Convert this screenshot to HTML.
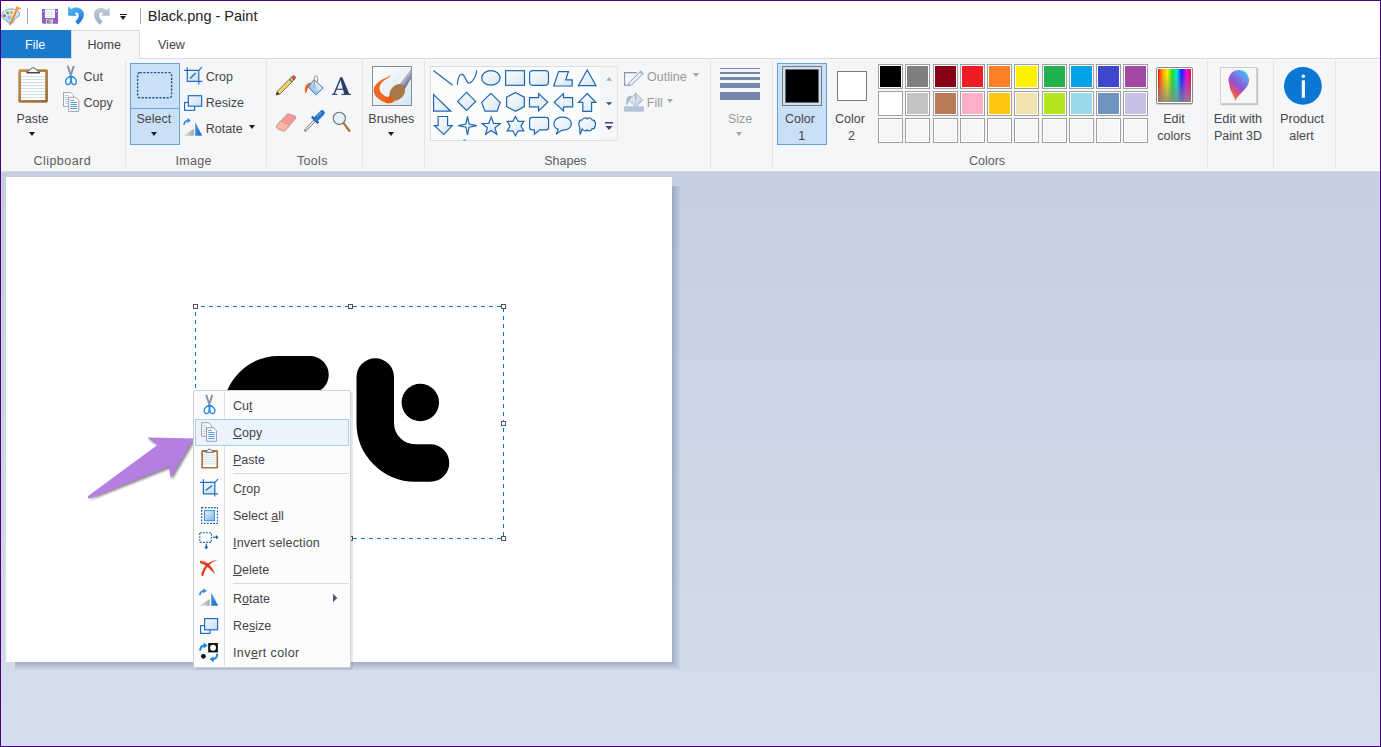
<!DOCTYPE html>
<html><head><meta charset="utf-8">
<style>
*{margin:0;padding:0;box-sizing:border-box}
html,body{width:1381px;height:747px;overflow:hidden;background:#fff}
body{position:relative;font-family:"Liberation Sans",sans-serif;font-size:12.5px;color:#474747}
.a{position:absolute}
svg{position:absolute;overflow:visible}
.t{position:absolute;white-space:nowrap;line-height:1}
#frame{position:absolute;left:0;top:0;width:1381px;height:747px;border:1px solid #47007f;z-index:50;pointer-events:none}
#title{left:1px;top:1px;width:1379px;height:29px;background:#fff}
#tabs{left:1px;top:30px;width:1379px;height:28px;background:#fff}
#ribbon{left:1px;top:58px;width:1379px;height:113px;background:#f5f6f7;border-top:1px solid #dadbdc}
#ribbonline{left:1px;top:171px;width:1379px;height:1px;background:#d5d9de}
#work{left:1px;top:172px;width:1379px;height:574px;background:linear-gradient(#c5cfe0,#d4deec)}
.sep{position:absolute;top:61px;width:1px;height:106px;background:#e2e3e4}
.lbl{position:absolute;white-space:nowrap;line-height:1;color:#5c5c5c;font-size:12.5px;top:155px}
.arr{position:absolute;width:0;height:0;border-left:3px solid transparent;border-right:3px solid transparent;border-top:4px solid #1e1e1e}
.sw{position:absolute;width:25px;height:25px;border:1px solid #a0a0a0;padding:1px;background:#fff}
.sw i{display:block;width:21px;height:21px}
.sw.e{background:#f5f6f7;box-shadow:inset 0 0 0 1px #fff}
.mi{position:absolute;left:233px;white-space:nowrap;line-height:1;color:#444;font-size:12.5px}
.u{text-decoration:underline;text-underline-offset:1.2px}
.c{text-align:center}
</style></head><body>
<div id="title" class="a"></div>
<div id="tabs" class="a"></div>
<div id="ribbon" class="a"></div>
<div id="ribbonline" class="a"></div>
<div id="work" class="a"></div>
<!-- title bar -->
<svg style="left:0;top:0" width="30" height="30" viewBox="0 0 30 30">
  <defs><linearGradient id="pal" x1="0" y1="0" x2="0" y2="1"><stop offset="0" stop-color="#e8f2fc"/><stop offset="1" stop-color="#b4d0ee"/></linearGradient></defs>
  <path d="M1.6 16.5 C1.2 12 6 9 11 9 C16 9 19.6 11 19.5 14.2 C19.4 17.2 16.2 17.6 14.8 19.2 C13.8 20.6 14.8 22.6 11.2 23.2 C7.5 23.6 6.5 20.5 4.5 19.2 C3 18.5 1.8 18.2 1.6 16.5 Z" fill="url(#pal)" stroke="#5f98d4" stroke-width="0.9"/>
  <circle cx="4.4" cy="15.8" r="1.5" fill="#e84a3a"/>
  <circle cx="7.6" cy="12.7" r="1.5" fill="#54b040"/>
  <circle cx="11.5" cy="12.3" r="1.5" fill="#f2a03a"/>
  <circle cx="9.3" cy="17.4" r="1.3" fill="none" stroke="#5f98d4" stroke-width="0.9"/>
  <path d="M10.3 24.2 L16 11.6" stroke="#ea8a1c" stroke-width="1.9" stroke-linecap="round"/>
  <path d="M15.6 10.8 L16.4 6.6 L20.8 8.4 Z" fill="#f0a850" stroke="#e08830" stroke-width="0.5"/>
</svg>
<div class="a" style="left:27px;top:8px;width:1px;height:16px;background:#a8a8a8"></div>
<svg style="left:0;top:0" width="60" height="30" viewBox="0 0 60 30">
  <defs><linearGradient id="shut" x1="0" y1="0" x2="1" y2="0"><stop offset="0" stop-color="#e0e0e0"/><stop offset="0.5" stop-color="#a8a8a8"/><stop offset="1" stop-color="#d8d8d8"/></linearGradient></defs>
  <path d="M42 9 H58 V23.8 H43 L42 22.8 Z" fill="#8a5ec6"/>
  <rect x="44.9" y="9" width="10.1" height="9" fill="#fff"/>
  <path d="M44.9 9.6 H55" stroke="#b8c8dc" stroke-width="1"/>
  <path d="M45.5 12.6 H54.4 M45.5 14.5 H54.4 M45.5 16.4 H54.4" stroke="#dedede" stroke-width="0.9"/>
  <rect x="45.9" y="19.1" width="7.1" height="4.7" fill="url(#shut)"/>
  <rect x="46.9" y="20.3" width="1.8" height="2.6" fill="#7a50b8"/>
  <circle cx="43.5" cy="11.6" r="0.6" fill="#fff"/><circle cx="56.5" cy="11.6" r="0.6" fill="#fff"/>
</svg>
<svg style="left:0;top:0" width="120" height="30" viewBox="0 0 120 30">
  <defs>
    <linearGradient id="ug" x1="0" y1="0" x2="0.4" y2="1"><stop offset="0" stop-color="#58c4fa"/><stop offset="1" stop-color="#1b78d6"/></linearGradient>
    <linearGradient id="rg" x1="0" y1="0" x2="0" y2="1"><stop offset="0" stop-color="#c2cede"/><stop offset="1" stop-color="#9babc2"/></linearGradient>
  </defs>
  <path fill="url(#ug)" d="M68.1 5.9 L71 9.1 C74.5 6.3 80.8 7 83.2 11.5 C85 15.5 83 20 78 24.7 L75.3 21.4 C78.5 18.5 79.5 15.5 78.2 13.5 C77.4 12.4 76 12.3 74.6 13.1 L76.9 15.7 L68.1 15.7 Z"/>
  <path fill="url(#rg)" transform="translate(177.8 0) scale(-1 1)" d="M68.1 6.9 L71.2 10.2 C74.5 6.8 80.8 7 83.2 11.5 C85 15.5 83 20 78 24.7 L75.3 21.4 C78.5 18.5 79.5 15.5 78.2 13.5 C77.4 12.4 76 12.3 74.6 13.4 L76.9 15.7 L68.1 15.7 Z"/>
</svg>
<div class="a" style="left:120px;top:13.5px;width:7px;height:1.2px;background:#1a1a1a"></div>
<div class="arr" style="left:120px;top:16px;border-left-width:3.5px;border-right-width:3.5px;border-top-width:4px"></div>
<div class="a" style="left:140px;top:8px;width:1px;height:16px;background:#a8a8a8"></div>
<div class="t" style="left:147.8px;top:8.5px;font-size:14.5px;color:#222">Black.png - Paint</div>
<!-- tabs -->
<div class="a" style="left:1px;top:30px;width:70px;height:28px;background:#1979ca"></div>
<div class="t" style="left:25px;top:39.1px;color:#fff">File</div>
<div class="a" style="left:71px;top:30px;width:69px;height:29px;background:#f5f6f7;border:1px solid #dadbdc;border-bottom:none"></div>
<div class="t" style="left:87.5px;top:39.1px;color:#444">Home</div>
<div class="t" style="left:158px;top:39.1px;color:#444">View</div>

<!-- clipboard group -->
<svg style="left:0;top:0" width="130" height="140" viewBox="0 0 130 140">
  <defs>
    <linearGradient id="brd" x1="0" y1="0" x2="1" y2="1"><stop offset="0" stop-color="#c0924e"/><stop offset="1" stop-color="#9a6a35"/></linearGradient>
  </defs>
  <rect x="18.3" y="69.2" width="29.6" height="33.6" rx="1.8" fill="url(#brd)"/>
  <rect x="21" y="72" width="24.2" height="28" fill="#fff"/>
  <path d="M21 76.6H45.2M21 79.6H45.2M21 82.6H45.2M21 85.6H45.2M21 88.6H45.2M21 91.6H45.2M21 94.6H45.2M21 97.6H45.2" stroke="#c4d6e2" stroke-width="0.9"/>
  <path d="M26.8 72.6 L31 68.6 Q33 66.6 35 68.6 L39.6 72.6 Z" fill="#f4f4f4" stroke="#505050" stroke-width="0.9"/>
  <path d="M26.5 72.8 H40" stroke="#3a3a3a" stroke-width="1.2"/>
  <!-- scissors -->
  <g transform="translate(-138.5 -329)"><path d="M205.6 395.2 L207 395 L210.2 405.6 L209.1 405.8 Z M212.9 395.2 L211.5 395 L208.3 405.6 L209.4 405.8 Z" fill="#7a8aa4" stroke="#7a8aa4" stroke-width="0.5" stroke-linejoin="round"/>
  <path d="M209.2 405.2 C206 406.6 203.9 408.6 204.1 411 C204.3 413 205.6 413.8 207 413.6 C208.5 413.4 209.2 411.6 209.2 409.6 Z M209.8 405.2 C213 406.6 215.1 408.6 214.9 411 C214.7 413 213.4 413.8 212 413.6 C210.5 413.4 209.8 411.6 209.8 409.6 Z" fill="none" stroke="#2a8ee2" stroke-width="1.4" stroke-linejoin="round"/></g>
  <!-- copy -->
  <path d="M63.5 92.5 H70.5 L73.5 95.5 V106.3 H63.5 Z" fill="#fff" stroke="#9a9a9a" stroke-width="0.9"/>
  <path d="M65 95.5H69M65 97.6H71M65 99.6H71M65 101.6H71M65 103.6H71" stroke="#9cc4e8" stroke-width="0.8"/>
  <path d="M68.7 97.3 H75.8 L78.8 100.3 V111.4 H68.7 Z" fill="#fff" stroke="#9a9a9a" stroke-width="0.9"/>
  <path d="M70.3 100.3H74M70.3 102.5H77M70.3 104.5H77M70.3 106.5H77M70.3 108.5H77" stroke="#3c8ed8" stroke-width="0.9"/>
</svg>
<div class="t" style="left:83.5px;top:70.9px">Cut</div>
<div class="t" style="left:83.5px;top:97.4px">Copy</div>
<div class="t" style="left:16.5px;top:113.2px">Paste</div>
<div class="arr" style="left:29px;top:131.5px"></div>
<div class="lbl" style="left:33.5px;letter-spacing:0.45px">Clipboard</div>
<div class="sep" style="left:125px"></div>

<!-- image group -->
<div class="a" style="left:130px;top:63px;width:50px;height:82px;background:#c9e0f6;border:1px solid #64a4e4"></div>
<div class="a" style="left:130px;top:108px;width:50px;height:1px;background:#64a4e4"></div>
<svg style="left:0;top:0" width="270" height="140" viewBox="0 0 270 140">
  <rect x="137.6" y="72.6" width="34" height="25.2" rx="2" fill="none" stroke="#1e5696" stroke-width="1.4" stroke-dasharray="2.2 1.4"/>
  <!-- crop -->
  <defs><linearGradient id="lb" x1="0" y1="0" x2="1" y2="1"><stop offset="0" stop-color="#f4f9fd"/><stop offset="1" stop-color="#c8dff2"/></linearGradient></defs>
  <rect x="187.3" y="70.4" width="11.5" height="10.9" fill="url(#lb)"/>
  <path d="M184.2 70.4 H198.8 V84.5 M187.3 67.2 V81.3 H202.5 M198.8 70.4 L202 67.2" fill="none" stroke="#1f6fc0" stroke-width="1.2"/>
  <path d="M190 78.6 L195.7 73" stroke="#1f6fc0" stroke-width="1.4"/>
  <!-- resize -->
  <rect x="184.6" y="102.5" width="10" height="7.8" fill="#fff" stroke="#1f6fc0" stroke-width="1.2"/>
  <rect x="188.3" y="95.7" width="13.3" height="10.5" fill="url(#lb)" stroke="#1f6fc0" stroke-width="1.2"/>
  <!-- rotate -->
  <defs><linearGradient id="gt" x1="0" y1="0" x2="1" y2="0"><stop offset="0" stop-color="#e8e8e8"/><stop offset="1" stop-color="#a8a8a8"/></linearGradient>
  <linearGradient id="bt" x1="0" y1="0" x2="1" y2="1"><stop offset="0" stop-color="#4aa0e8"/><stop offset="1" stop-color="#1a6cc0"/></linearGradient></defs>
  <path d="M183 135.7 L194 128.7 V135.7 Z" fill="url(#gt)"/>
  <path d="M195.2 122 L202.2 135.7 H195.2 Z" fill="url(#bt)"/>
  <path d="M184 124.8 Q184.4 120.9 187.9 120.6" fill="none" stroke="#2b8ce0" stroke-width="1.7"/>
  <path d="M187.3 118 L190.9 120.6 L187.3 123.2 Z" fill="#2b8ce0"/>
</svg>
<div class="t" style="left:136.5px;top:112.7px">Select</div>
<div class="arr" style="left:151px;top:131.6px"></div>
<div class="t" style="left:205.8px;top:71.2px">Crop</div>
<div class="t" style="left:205.8px;top:97.0px">Resize</div>
<div class="t" style="left:205.8px;top:122.6px">Rotate</div>
<div class="arr" style="left:249px;top:125px"></div>
<div class="lbl" style="left:175.5px;letter-spacing:0.3px">Image</div>
<div class="sep" style="left:266px"></div>

<!-- tools group -->
<svg style="left:0;top:0" width="430" height="140" viewBox="0 0 430 140">
  <!-- pencil -->
  <path d="M276.2 95 L277.3 91.3 L291.3 77.3 L294 80 L280 94 Z" fill="#f7cf6e" stroke="#4a3c28" stroke-width="0.7" stroke-linejoin="round"/>
  <path d="M276.2 95 L277.1 91.8 L279.4 94.1 Z" fill="#2a2a2a"/>
  <path d="M289.4 79.2 L292.1 81.9" stroke="#2e9a48" stroke-width="1.3"/>
  <path d="M291.3 77.3 L292.6 76 Q293.6 75.2 294.6 76.1 L295.2 76.7 Q296 77.7 295.2 78.7 L294 80 Z" fill="#e25a4a" stroke="#5a4038" stroke-width="0.6"/>
  <!-- bucket -->
  <defs><linearGradient id="bk" x1="0.8" y1="0.2" x2="0.2" y2="0.8"><stop offset="0" stop-color="#ffffff"/><stop offset="1" stop-color="#8ab8e4"/></linearGradient></defs>
  <path d="M310.8 82.6 Q306.5 83.5 305.2 87 Q304 90.5 305.4 93.8 Q307.4 91.5 307.8 88.6 Q308.4 86.6 309.8 85.8 Z" fill="#f46420"/>
  <path d="M314 79.7 L323.2 88.1 L315.9 94.8 L308.4 87.2 Z" fill="url(#bk)" stroke="#3a78c0" stroke-width="1"/>
  <path d="M314.3 85.6 V77.6 Q314.5 75.9 315.9 75.9 Q317.5 75.9 317.6 77.6 V81.8" fill="none" stroke="#8a8a8a" stroke-width="0.9"/>
  <circle cx="314.3" cy="86.6" r="1.1" fill="#fff" stroke="#8a8a8a" stroke-width="0.7"/>
</svg>
<svg style="left:0;top:0" width="360" height="100" viewBox="0 0 360 100"><g fill="#2b3a6a">
  <path d="M339.8 77.2 L342.3 77.2 L349.4 94.2 L344.3 94.2 Z"/>
  <path d="M340.6 78.4 L334 94.2" stroke="#2b3a6a" stroke-width="1.4"/>
  <rect x="336.2" y="88.7" width="8.3" height="1.1"/>
  <rect x="332" y="93.8" width="5.2" height="1.1"/>
  <rect x="341.3" y="93.8" width="9.7" height="1.1"/>
</g></svg>
<svg style="left:0;top:0" width="430" height="140" viewBox="0 0 430 140">
  <!-- eraser -->
  <path d="M276.4 125.6 L286.8 114.4 Q287.8 113.6 289.2 114 L294.9 116 Q296.4 116.8 295.6 118.4 L285.4 130.4 Q284.4 131.4 283 131 L277.6 128.8 Q275.9 127.8 276.4 125.6 Z" fill="#f29a9c" stroke="#cf7a76" stroke-width="0.7"/>
  <path d="M276.6 125.4 L280.6 121.2 L289.3 124.6 L285.4 130.4 Q284.4 131.4 283 131 L277.6 128.8 Q276 127.8 276.6 125.4 Z" fill="#f6b8a8" stroke="#cf8a7a" stroke-width="0.5"/>
  <!-- dropper -->
  <path d="M314.4 121 L305.4 130.3" stroke="#707070" stroke-width="2.6" stroke-linecap="round"/>
  <path d="M314.4 121 L305.6 130.1" stroke="#ffffff" stroke-width="1.2"/>
  <path d="M308 127.6 L305.6 130.1" stroke="#a8cff0" stroke-width="1.3"/>
  <path d="M312.6 117.4 L317.6 122.4" stroke="#2464b4" stroke-width="2.6" stroke-linecap="round"/>
  <path d="M316.2 118.8 L322.2 112.8" stroke="#2a76c8" stroke-width="5.2" stroke-linecap="round"/>
  <path d="M317.5 116.2 L321 112.7" stroke="#5aa0e0" stroke-width="1.2" stroke-linecap="round"/>
  <!-- magnifier -->
  <path d="M343.2 122.6 L349.3 130.8" stroke="#a87838" stroke-width="2.3" stroke-linecap="round"/>
  <circle cx="339.3" cy="118.3" r="6.1" fill="#e4f0fa" stroke="#707070" stroke-width="1.1"/>
  <!-- brushes -->
  <defs><linearGradient id="bg1" x1="0" y1="0" x2="1" y2="1"><stop offset="0" stop-color="#ffffff"/><stop offset="1" stop-color="#d4e6f4"/></linearGradient>
  <linearGradient id="hd" x1="0" y1="0" x2="1" y2="1"><stop offset="0" stop-color="#ffffff"/><stop offset="0.45" stop-color="#b8c0d4"/><stop offset="0.7" stop-color="#5a6478"/><stop offset="1" stop-color="#20242c"/></linearGradient></defs>
  <clipPath id="bclip"><rect x="373" y="67" width="38" height="38"/></clipPath>
  <rect x="372.5" y="66.5" width="39" height="39" fill="url(#bg1)" stroke="#8c8c8c" stroke-width="1"/>
  <g clip-path="url(#bclip)">
    <path d="M397.5 84.5 L411.5 66 L416 70 L404.5 89.5 Z" fill="url(#hd)"/>
    <path d="M398.5 84 L411 67.5" stroke="#ffffff" stroke-width="1.3" opacity="0.9"/>
  </g>
  <path d="M387.8 73.5 Q390.5 75.8 387.5 77.3 Q378 80.5 374.2 87 Q372.3 92.5 376.5 97 Q381 101.5 386.5 103 Q391 103.5 393.5 102 L390 97.5 Q384.5 97 381 92.8 Q378.2 88.5 380.5 84.5 Q383.5 79.8 388.8 77.8 Q391 76 387.8 73.5 Z" fill="#f26622"/>
  <ellipse cx="397.2" cy="92.4" rx="9.3" ry="6.8" transform="rotate(-50 397.2 92.4)" fill="#a87a4a"/>
  <path d="M384.5 100.5 Q387.5 97 390.5 95 L394.5 101 Q391 104.3 386.5 103 Z" fill="#ea5a1a"/>
</svg>
<div class="lbl" style="left:297px;letter-spacing:0.3px">Tools</div>
<div class="sep" style="left:362px"></div>
<div class="t" style="left:368.3px;top:113.0px">Brushes</div>
<div class="arr" style="left:388px;top:131.8px"></div>
<div class="sep" style="left:424px"></div>

<!-- shapes group -->
<div class="a" style="left:430px;top:66px;width:171px;height:75px;background:#fbfcfc;border:1px solid #dcdddf"></div>
<div class="a" style="left:600px;top:66px;width:18px;height:75px;background:#f5f6f7;border:1px solid #e3e4e6;border-left:none"></div>
<svg style="left:0;top:0" width="630" height="145" viewBox="0 0 630 145">
  <defs><linearGradient id="sf" x1="0" y1="0" x2="1" y2="1"><stop offset="0" stop-color="#ffffff"/><stop offset="1" stop-color="#d6e6f4"/></linearGradient></defs>
  <g fill="url(#sf)" stroke="#1f66b2" stroke-width="1.2" stroke-linejoin="miter">
    <path d="M433.4 70.6 L452.6 85.2" fill="none"/>
    <path d="M457.4 84.6 C458 74 462 72 464.5 76.5 C466.5 80 467 84 469.5 83 C473 81.5 476.5 76 476.7 70.3" fill="none"/>
    <ellipse cx="490.9" cy="77.9" rx="9.2" ry="7.2"/>
    <rect x="505.6" y="70.7" width="18.9" height="14.6"/>
    <rect x="529.6" y="70.7" width="18.9" height="14.6" rx="3.2"/>
    <path d="M558.6 71.6 H568.4 L565.8 79.9 H572.2 V86 H553.7 Z"/>
    <path d="M587.2 70 L596 85.6 H578.4 Z"/>
    <path d="M433.6 94.6 V111.2 H450.8 Z"/>
    <path d="M466.6 92.4 L475.6 101.4 L466.6 110.4 L457.6 101.4 Z"/>
    <path d="M490.9 93.4 L500.2 102.4 L497.2 111.2 H485 L481.7 102.4 Z"/>
    <path d="M515.5 92.5 L524.3 97.2 V106.6 L515.5 111.4 L506.6 106.6 V97.2 Z"/>
    <path d="M529.5 97.6 H538.6 V93.6 L547.8 102.2 L538.6 110.9 V106.9 H529.5 Z"/>
    <path d="M572.6 97.6 H563.5 V93.6 L554.2 102.2 L563.5 110.9 V106.9 H572.6 Z"/>
    <path d="M587.2 93.5 L595.8 102.4 H591.6 V111.3 H582.8 V102.4 H578.5 Z"/>
    <path d="M438.1 116.5 H447.6 V125.6 H452.2 L443.8 134.4 L434.4 125.6 H438.1 Z"/>
    <polygon points="467.5,116.4 469.1,124 476.7,125.6 469.1,127.2 467.5,134.8 465.9,127.2 458.3,125.6 465.9,124"/>
    <polygon points="491.2,116.9 493.6,123.3 500.3,123.5 495.0,127.7 496.8,134.3 491.2,130.5 485.6,134.3 487.4,127.7 482.1,123.5 488.8,123.3"/>
    <polygon points="515.5,116.5 518.2,121.4 523.8,121.3 520.9,126.1 523.8,130.9 518.2,130.8 515.5,135.7 512.8,130.8 507.2,130.9 510.1,126.1 507.2,121.3 512.8,121.4"/>
    <path d="M532.2 117.4 H546 Q548.6 117.4 548.6 120 V127.2 Q548.6 129.8 546 129.8 H539.6 L534.4 134.3 L534.4 129.8 H532.2 Q529.6 129.8 529.6 127.2 V120 Q529.6 117.4 532.2 117.4 Z"/>
    <path d="M558.2 129.4 C551.5 127 552.5 117.2 563 117.2 C573.5 117.2 574.5 129.4 563.5 130.2 C561.8 130.3 560.2 130.8 556.2 134.4 Z"/>
    <path d="M587.1 118.8 A3 3 0 0 1 592.0 119.9 A3 3 0 0 1 595.1 122.7 A3 3 0 0 1 595.1 126.1 A3 3 0 0 1 592.0 128.9 A3 3 0 0 1 587.1 130.0 A3 3 0 0 1 582.2 128.9 L580.1 134.6 L579.6 126.9 A3 3 0 0 1 579.1 126.1 A3 3 0 0 1 579.1 122.7 A3 3 0 0 1 582.2 119.9 A3 3 0 0 1 587.1 118.8 Z"/>
  </g>
  <path d="M463.5 140 H465.5" stroke="#1f66b2" stroke-width="1"/>
  <path d="M606 80.7 L609.1 77 L612.2 80.7 Z" fill="#a8b0bf"/>
  <path d="M606 102.2 H612.2 L609.1 105.2 Z" fill="#3b4a6e"/>
  <path d="M605 122 H613 V123.6 H605 Z M605.5 126 H612.5 L609 130 Z" fill="#3b4a6e"/>
</svg>
<div class="lbl" style="left:544.2px">Shapes</div>

<!-- outline / fill / size -->
<svg style="left:0;top:0" width="780" height="145" viewBox="0 0 780 145">
  <path d="M636.9 72.6 H624.6 V85.2 H628.5" fill="none" stroke="#8093b2" stroke-width="1.1"/>
  <path d="M628.3 85.5 L629.2 82.6 L640.8 71 L643.2 73.4 L631.6 85 Z" fill="#e8eef6" stroke="#8093b2" stroke-width="0.9"/>
  <path d="M640 71.8 L642.4 74.2" stroke="#8093b2" stroke-width="1"/>
  <defs><linearGradient id="fg" x1="0" y1="0" x2="1" y2="1"><stop offset="0" stop-color="#eef3f8"/><stop offset="1" stop-color="#b6c6da"/></linearGradient></defs>
  <path d="M631.5 95.5 Q627.2 96 626.3 99.8 V105.8 Q628.2 104.5 628.6 101.5 Q629.2 99 632 98.6 Z" fill="#a8b8cd"/>
  <path d="M628.8 100.2 L635.8 93.2 L642.8 100.2 L635.8 107.2 Z" fill="url(#fg)" stroke="#aebdd1" stroke-width="1"/>
  <path d="M635.6 99.6 V92.6" stroke="#a3b3c9" stroke-width="1.3"/>
  <rect x="624.1" y="106.3" width="19.8" height="5.4" fill="#b4c3d6"/>
</svg>
<div class="t" style="left:647px;top:71.2px;color:#9a9a9a">Outline</div>
<div class="arr" style="left:693px;top:73px;border-top-color:#a6a6a6"></div>
<div class="t" style="left:646.8px;top:96.6px;color:#9a9a9a">Fill</div>
<div class="arr" style="left:667px;top:99.2px;border-top-color:#a6a6a6"></div>
<div class="sep" style="left:710px"></div>
<div class="a" style="left:720px;top:67.6px;width:40px;height:1px;background:#7689aa"></div>
<div class="a" style="left:720px;top:71.8px;width:40px;height:2px;background:#7689aa"></div>
<div class="a" style="left:720px;top:76.9px;width:40px;height:3px;background:#7689aa"></div>
<div class="a" style="left:720px;top:83px;width:40px;height:4.7px;background:#7689aa"></div>
<div class="a" style="left:720px;top:92.2px;width:40px;height:7.7px;background:#7689aa"></div>
<div class="t" style="left:728px;top:112.7px;color:#9a9a9a">Size</div>
<div class="arr" style="left:736px;top:131.5px;border-top-color:#a6a6a6"></div>
<div class="sep" style="left:772px"></div>

<!-- colors group -->
<div class="a" style="left:777px;top:63px;width:50px;height:82px;background:#c9e0f6;border:1px solid #64a4e4"></div>
<div class="a" style="left:782px;top:66px;width:40px;height:40px;border:1px solid #7a7a7a;background:transparent;padding:2px"><div style="width:34px;height:34px;background:#000;border:1px solid #6a6a6a;border-radius:1px"></div></div>
<div class="t" style="left:785px;top:112.7px">Color</div>
<div class="t" style="left:798.3px;top:129.8px">1</div>
<div class="a" style="left:837px;top:71px;width:30px;height:30px;border:1px solid #7a7a7a;background:#fff"></div>
<div class="t" style="left:835px;top:112.7px">Color</div>
<div class="t" style="left:848px;top:129.8px">2</div>
<div class="sw" style="left:878.00px;top:64px"><i style="background:#000000"></i></div>
<div class="sw" style="left:905.25px;top:64px"><i style="background:#7f7f7f"></i></div>
<div class="sw" style="left:932.50px;top:64px"><i style="background:#880015"></i></div>
<div class="sw" style="left:959.75px;top:64px"><i style="background:#ed1c24"></i></div>
<div class="sw" style="left:987.00px;top:64px"><i style="background:#ff7f27"></i></div>
<div class="sw" style="left:1014.25px;top:64px"><i style="background:#fff200"></i></div>
<div class="sw" style="left:1041.50px;top:64px"><i style="background:#22b14c"></i></div>
<div class="sw" style="left:1068.75px;top:64px"><i style="background:#00a2e8"></i></div>
<div class="sw" style="left:1096.00px;top:64px"><i style="background:#3f48cc"></i></div>
<div class="sw" style="left:1123.25px;top:64px"><i style="background:#a349a4"></i></div>
<div class="sw" style="left:878.00px;top:91px"><i style="background:#ffffff"></i></div>
<div class="sw" style="left:905.25px;top:91px"><i style="background:#c3c3c3"></i></div>
<div class="sw" style="left:932.50px;top:91px"><i style="background:#b97a57"></i></div>
<div class="sw" style="left:959.75px;top:91px"><i style="background:#ffaec9"></i></div>
<div class="sw" style="left:987.00px;top:91px"><i style="background:#ffc90e"></i></div>
<div class="sw" style="left:1014.25px;top:91px"><i style="background:#efe4b0"></i></div>
<div class="sw" style="left:1041.50px;top:91px"><i style="background:#b5e61d"></i></div>
<div class="sw" style="left:1068.75px;top:91px"><i style="background:#99d9ea"></i></div>
<div class="sw" style="left:1096.00px;top:91px"><i style="background:#7092be"></i></div>
<div class="sw" style="left:1123.25px;top:91px"><i style="background:#c8bfe7"></i></div>
<div class="sw e" style="left:878.00px;top:118px"></div>
<div class="sw e" style="left:905.25px;top:118px"></div>
<div class="sw e" style="left:932.50px;top:118px"></div>
<div class="sw e" style="left:959.75px;top:118px"></div>
<div class="sw e" style="left:987.00px;top:118px"></div>
<div class="sw e" style="left:1014.25px;top:118px"></div>
<div class="sw e" style="left:1041.50px;top:118px"></div>
<div class="sw e" style="left:1068.75px;top:118px"></div>
<div class="sw e" style="left:1096.00px;top:118px"></div>
<div class="sw e" style="left:1123.25px;top:118px"></div>
<div class="lbl" style="left:969px">Colors</div>

<!-- edit colors / paint3d / product alert -->
<div class="a" style="left:1156px;top:67px;width:37px;height:37px;background:#fff;border:1px solid #8c8c8c;border-radius:2px;box-shadow:0 1px 1px rgba(0,0,0,.18)"></div>
<div class="a" style="left:1158px;top:69px;width:33px;height:33px;background:linear-gradient(rgba(136,136,136,0) 15%,rgba(136,136,136,.85)),linear-gradient(90deg,#ff1000,#ffa000,#f8f000,#20e020,#00e8e0,#1020ff,#e010e0,#ff0040)"></div>
<div class="t c" style="left:1150px;width:48px;top:113.2px">Edit</div>
<div class="t c" style="left:1150px;width:48px;top:129.8px">colors</div>
<div class="sep" style="left:1207px"></div>
<div class="a" style="left:1220px;top:67px;width:37px;height:37px;background:#f6f6f6;border:1px solid #cfcfcf;box-shadow:1px 1px 1px rgba(0,0,0,.2)"></div>
<svg style="left:0;top:0" width="1381" height="140" viewBox="0 0 1381 140">
  <defs>
    <linearGradient id="p3d" x1="0.8" y1="0" x2="0.2" y2="1">
      <stop offset="0" stop-color="#30d0f4"/><stop offset="0.3" stop-color="#7c7ce8"/><stop offset="0.5" stop-color="#8658d8"/><stop offset="0.72" stop-color="#e04a78"/><stop offset="0.88" stop-color="#f07040"/><stop offset="1" stop-color="#f8c020"/>
    </linearGradient>
  </defs>
  <path d="M1235.4 100.8 C1234 95.5 1229.6 90.5 1229.2 84 A10.3 10.3 0 1 1 1247.3 86 C1244.5 91 1238 94.5 1235.4 100.8 Z" fill="url(#p3d)"/>
  <circle cx="1302.9" cy="85.9" r="18.9" fill="#0a78d2"/>
  <circle cx="1303.3" cy="76.2" r="1.7" fill="#fff"/>
  <rect x="1301.8" y="80.3" width="3.1" height="17.5" fill="#fff"/>
</svg>
<div class="t c" style="left:1205px;width:66px;top:113.2px;font-size:12.8px">Edit with</div>
<div class="t c" style="left:1205px;width:66px;top:129.8px">Paint 3D</div>
<div class="sep" style="left:1273px"></div>
<div class="t c" style="left:1271px;width:62px;top:113.2px;font-size:12.8px">Product</div>
<div class="t c" style="left:1270.5px;width:62px;top:129.8px">alert</div>
<div class="sep" style="left:1335px"></div>

<!-- canvas -->
<div class="a" style="left:672px;top:186px;width:8px;height:476px;background:linear-gradient(90deg,rgba(112,130,162,.52),rgba(112,130,162,.3) 45%,rgba(112,130,162,.08))"></div>
<div class="a" style="left:15px;top:662px;width:657px;height:8px;background:linear-gradient(rgba(112,130,162,.52),rgba(112,130,162,.3) 45%,rgba(112,130,162,.08))"></div>
<div class="a" style="left:672px;top:662px;width:8px;height:8px;background:linear-gradient(90deg,rgba(112,130,162,.52),rgba(112,130,162,.3) 45%,rgba(112,130,162,.08));clip-path:polygon(0 0,100% 0,100% 100%)"></div>
<div class="a" style="left:672px;top:662px;width:8px;height:8px;background:linear-gradient(rgba(112,130,162,.52),rgba(112,130,162,.3) 45%,rgba(112,130,162,.08));clip-path:polygon(0 0,0 100%,100% 100%)"></div>
<div class="a" style="left:6px;top:177px;width:666px;height:485px;background:#fff"></div>
<svg style="left:0;top:0" width="700" height="700" viewBox="0 0 700 700">
  <path d="M375.25 377 V423 A40 40 0 0 0 415.25 463 H430.5" fill="none" stroke="#000" stroke-width="37.5" stroke-linecap="round"/>
  <circle cx="420.3" cy="402.5" r="18.7" fill="#000"/>
  <path d="M310 374.75 H278.6 A36.5 36.5 0 0 0 242.1 411.25 V440" fill="none" stroke="#000" stroke-width="37.5" stroke-linecap="round"/>
  <g fill="none" stroke="#0078d7" stroke-width="1" stroke-dasharray="4 4">
    <path d="M195.5 306.5 H503.5 M195.5 538.5 H503.5 M195.5 306.5 V538.5" stroke-dashoffset="2.5"/>
    <path d="M503.5 306.5 V538.5" stroke-dashoffset="6.5"/>
  </g>
  <g fill="#fff" stroke="#555" stroke-width="1">
    <rect x="193.5" y="304.5" width="4" height="4"/>
    <rect x="348.5" y="304.5" width="4" height="4"/>
    <rect x="501.5" y="304.5" width="4" height="4"/>
    <rect x="501.5" y="421.5" width="4" height="4"/>
    <rect x="501.5" y="536.5" width="4" height="4"/>
    <rect x="348.5" y="536.5" width="4" height="4"/>
    <rect x="193.5" y="536.5" width="4" height="4"/>
    <rect x="193.5" y="421.5" width="4" height="4"/>
  </g>
  <defs><filter id="ash" x="-20%" y="-20%" width="140%" height="140%"><feGaussianBlur stdDeviation="0.9"/></filter></defs>
  <path d="M89.5 500.5 L159 446.5 L148.8 439.5 L195.5 440.2 L172.2 480 L170.6 468.5 Z" fill="#333" opacity="0.55" filter="url(#ash)"/>
  <path d="M88 497.5 Q87.6 496.3 88.8 495.6 L157.4 444.9 L147.2 437.5 L193.8 438.4 L170.5 477.9 L168.8 466.5 L90 498.8 Q88.6 499 88 497.5 Z" fill="#b47fe0"/>
</svg>

<!-- context menu -->
<div class="a" style="left:195px;top:392px;width:158px;height:278px;background:rgba(40,50,70,.10);border-radius:2px"></div>
<div class="a" style="left:193px;top:390px;width:158px;height:278px;background:#fcfcfc;border:1px solid #cfd0d2;border-radius:2px"></div>
<div class="a" style="left:224px;top:392px;width:1px;height:274px;background:#e0e1e3"></div>
<div class="a" style="left:195px;top:419px;width:154px;height:27px;background:#ebf3fd;border:1px solid #a6cff5"></div>
<div class="a" style="left:233px;top:473px;width:116px;height:1px;background:#d9dadc"></div>
<div class="a" style="left:233px;top:583px;width:116px;height:1px;background:#d9dadc"></div>
<div class="mi" style="top:400.4px">Cu<span class="u">t</span></div>
<div class="mi" style="top:427.3px"><span class="u">C</span>opy</div>
<div class="mi" style="top:454.0px"><span class="u">P</span>aste</div>
<div class="mi" style="top:483.0px">C<span class="u">r</span>op</div>
<div class="mi" style="top:510.3px">Select <span class="u">a</span>ll</div>
<div class="mi" style="top:537.1px;letter-spacing:0.18px"><span class="u">I</span>nvert selection</div>
<div class="mi" style="top:564.1px"><span class="u">D</span>elete</div>
<div class="mi" style="top:593.3px">R<span class="u">o</span>tate</div>
<div class="mi" style="top:620.1px">Re<span class="u">s</span>ize</div>
<div class="mi" style="top:647.1px;letter-spacing:0.4px">Inv<span class="u">e</span>rt color</div>
<svg style="left:0;top:0" width="360" height="680" viewBox="0 0 360 680">
  <defs>
    <linearGradient id="mg" x1="0" y1="0" x2="1" y2="1"><stop offset="0" stop-color="#f6fafd"/><stop offset="1" stop-color="#c6ddf2"/></linearGradient>
    <linearGradient id="sa" x1="0" y1="0" x2="1" y2="1"><stop offset="0" stop-color="#e6f2fd"/><stop offset="1" stop-color="#7ab6ee"/></linearGradient>
  </defs>
  <path d="M333 593.8 L337.3 598 L333 602.3 Z" fill="#4a5878"/>
  <!-- scissors -->
  <path d="M205.6 395.2 L207 395 L210.2 405.6 L209.1 405.8 Z M212.9 395.2 L211.5 395 L208.3 405.6 L209.4 405.8 Z" fill="#7a8aa4" stroke="#7a8aa4" stroke-width="0.5" stroke-linejoin="round"/>
  <path d="M209.2 405.2 C206 406.6 203.9 408.6 204.1 411 C204.3 413 205.6 413.8 207 413.6 C208.5 413.4 209.2 411.6 209.2 409.6 Z M209.8 405.2 C213 406.6 215.1 408.6 214.9 411 C214.7 413 213.4 413.8 212 413.6 C210.5 413.4 209.8 411.6 209.8 409.6 Z" fill="none" stroke="#2a8ee2" stroke-width="1.4" stroke-linejoin="round"/>
  <!-- copy -->
  <path d="M201.7 422.7 H208.5 L211.3 425.5 V436.2 H201.7 Z" fill="#fff" stroke="#8f8f8f" stroke-width="0.9"/>
  <path d="M203.2 425.6H206.8M203.2 427.6H209.5M203.2 429.6H209.5M203.2 431.6H209.5M203.2 433.6H209.5" stroke="#9cc4e8" stroke-width="0.8"/>
  <path d="M206.6 427.8 H213.6 L216.4 430.6 V441.2 H206.6 Z" fill="#fff" stroke="#8f8f8f" stroke-width="0.9"/>
  <path d="M208.2 430.5H211.5M208.2 432.6H214.8M208.2 434.6H214.8M208.2 436.6H214.8M208.2 438.6H214.8" stroke="#3c8ed8" stroke-width="0.9"/>
  <!-- paste -->
  <rect x="201.3" y="450" width="16.8" height="18.6" rx="1.3" fill="#a87840"/>
  <rect x="203" y="452" width="13.4" height="15" fill="#fff"/>
  <path d="M203 455H216.4M203 457.2H216.4M203 459.4H216.4M203 461.6H216.4M203 463.8H216.4" stroke="#c4d4e0" stroke-width="0.8"/>
  <path d="M205.5 452.4 L208 449.6 Q209.5 448.4 211 449.6 L213.8 452.4 Z" fill="#f0f0f0" stroke="#505050" stroke-width="0.8"/>
  <!-- crop -->
  <rect x="203.4" y="482.3" width="11.4" height="11.5" fill="url(#mg)"/>
  <path d="M200.1 482.3 H214.8 V496.4 M203.4 479.3 V493.8 H218 M214.8 482.3 L218 479.1" fill="none" stroke="#1f6fc0" stroke-width="1.2"/>
  <path d="M205.7 490.5 L212.1 485.5" stroke="#1f6fc0" stroke-width="1.4"/>
  <!-- select all -->
  <rect x="201.6" y="507.6" width="15.8" height="15.8" fill="none" stroke="#1f62aa" stroke-width="1.1" stroke-dasharray="1.8 1.3"/>
  <rect x="204.5" y="510.6" width="10" height="10" fill="url(#sa)" stroke="#3a90e0" stroke-width="1"/>
  <!-- invert selection -->
  <rect x="199.8" y="532.8" width="11.6" height="9.6" fill="none" stroke="#1f62aa" stroke-width="1.1" stroke-dasharray="1.8 1.3"/>
  <path d="M213 537.2 H216.5" stroke="#1f62aa" stroke-width="1.2"/>
  <path d="M216 535 L218.6 537.2 L216 539.4 Z" fill="#1f62aa"/>
  <path d="M206.3 543.8 V547" stroke="#1f62aa" stroke-width="1.2"/>
  <path d="M204.1 546.6 L206.3 549.5 L208.5 546.6 Z" fill="#1f62aa"/>
  <!-- delete -->
  <path d="M200.2 560.8 Q205.5 560.6 209.4 564.6 Q213 568.6 215.4 574.6 Q211.8 571 208.4 567.8 Q204.5 563.9 200.4 563.2 Q199.6 562 200.2 560.8 Z" fill="#e23c1e"/>
  <path d="M217.6 560.2 Q212.2 561.6 208.8 564.9 Q204.6 569.4 203.2 576 Q201.6 576.4 201.3 574.8 Q202.4 568.6 207.2 564 Q211.8 560.2 217.6 560.2 Z" fill="#de3418"/>
  <path d="M201 561.6 Q204.5 561.6 207 563.2" stroke="#f58070" stroke-width="0.8" fill="none"/>
  <!-- rotate -->
  <path d="M199.1 605.7 L209.7 599.1 V605.7 Z" fill="url(#gt)"/>
  <path d="M211.2 592.5 L218.2 605.7 H211.2 Z" fill="url(#bt)"/>
  <path d="M199.8 595.2 Q200.2 591.2 203.8 590.8" fill="none" stroke="#2b8ce0" stroke-width="1.7"/>
  <path d="M203.2 588.2 L206.8 590.8 L203.2 593.4 Z" fill="#2b8ce0"/>
  <!-- resize -->
  <rect x="200.6" y="625.6" width="9.5" height="7.8" fill="#fff" stroke="#1f6fc0" stroke-width="1.2"/>
  <rect x="204.6" y="618.6" width="13" height="11.2" fill="url(#mg)" stroke="#1f6fc0" stroke-width="1.2"/>
  <!-- invert color -->
  <rect x="199.4" y="652.2" width="9.2" height="8" fill="#f4f4f4"/>
  <circle cx="203.4" cy="656.3" r="2.4" fill="#111"/>
  <rect x="208.2" y="643" width="9.7" height="9.4" fill="#111"/>
  <circle cx="213" cy="647.7" r="3" fill="#fff"/>
  <path d="M200.2 650.8 Q200.2 646 204.2 645.6" fill="none" stroke="#1f86e0" stroke-width="2"/>
  <path d="M203.6 642.6 L207.6 645.6 L203.6 648.6 Z" fill="#1f86e0"/>
  <path d="M217.2 653.8 Q217.2 658.8 213 659.2" fill="none" stroke="#1f86e0" stroke-width="2"/>
  <path d="M213.6 656.2 L209.6 659.2 L213.6 662.2 Z" fill="#1f86e0"/>
</svg>

<div id="frame"></div>
</body></html>
